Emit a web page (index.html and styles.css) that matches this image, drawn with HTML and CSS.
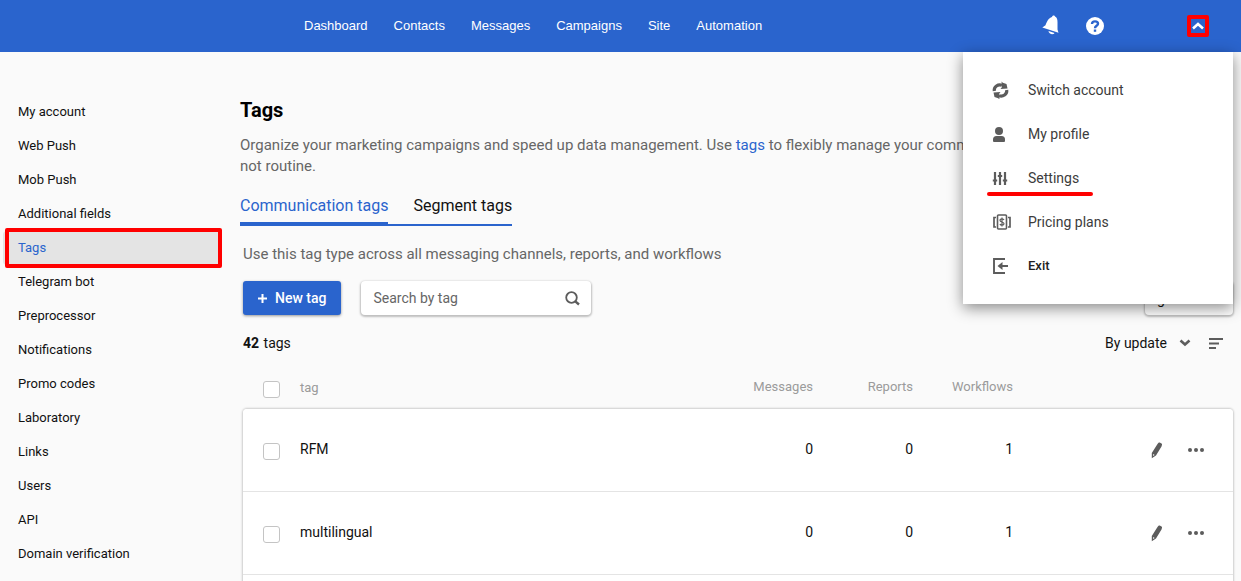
FILE: index.html
```html
<!DOCTYPE html>
<html lang="en">
<head>
<meta charset="utf-8">
<title>Tags</title>
<link rel="stylesheet" href="styles.css">
</head>
<body>
<header class="topbar">
  <nav class="topnav" aria-label="Main">
    <a href="#">Dashboard</a>
    <a href="#">Contacts</a>
    <a href="#">Messages</a>
    <a href="#">Campaigns</a>
    <a href="#">Site</a>
    <a href="#">Automation</a>
  </nav>
  <div class="tools">
    <button class="icon-btn bell" aria-label="Notifications">
      <svg width="18" height="20" viewBox="0 0 18 20"><path fill="#fff" d="M10 2C10 .3 12.600-.2 13 1.500C14.800 2.300 15.500 4 15.500 7V14.500L16.500 17.800L.3 12.400L3.500 10.200C5 6.500 6.500 3 10 2ZM6.500 16L12.500 18C11.500 20.300 6.500 19 6.500 16Z"/></svg>
    </button>
    <button class="icon-btn help" aria-label="Help">
      <svg width="18" height="18" viewBox="0 0 18 18"><circle cx="9" cy="9" r="9" fill="#fff"/><path d="M6 7C6 3.400 12 3.600 12 6.800C12 8.800 9 8.900 9 11.200" fill="none" stroke="#2a64cd" stroke-width="2.400"/><path fill="#2a64cd" d="M7.800 12.500h2.400v2.300H7.800z"/></svg>
    </button>
    <div class="account">
      <button class="account-toggle" aria-label="Account menu" aria-expanded="true">
        <svg width="12" height="8" viewBox="0 0 12 8"><path d="M1 6.500L6 2L11 6.500" fill="none" stroke="#fff" stroke-width="2.600"/></svg>
      </button>
      <div class="menu">
        <a href="#"><svg width="18" height="18" viewBox="0 0 18 18"><path d="M2.300 10C1.700 5.500 6 3 10 4.300M14.700 9C15.300 13.500 11 16 7 14.700" fill="none" stroke="#5c5c5c" stroke-width="3.200"/><path fill="#5c5c5c" d="M9.500.5L10.800 1.800L14.500 3L15.500 7.500L8.500 8L10 6ZM7.500 18.500L6.200 17.200L2.500 16L1.500 11.500L8.500 11L7 13Z"/></svg>Switch account</a>
        <a href="#"><svg width="18" height="18" viewBox="0 0 18 18"><circle cx="7" cy="6" r="4" fill="#5c5c5c"/><path fill="#5c5c5c" d="M1 16V14.500Q1 11 4.500 11H9.500Q13 11 13 14.500V16Q13 17 12 17H2Q1 17 1 16Z"/></svg>My profile</a>
        <a href="#" class="marked"><svg width="18" height="18" viewBox="0 0 18 18"><path d="M3 3V16M8 3V16M13 3V16" stroke="#5c5c5c" stroke-width="2.200"/><path d="M.8 11.500H5.200M5.800 7H10.200M10.800 11.500H15.200" stroke="#5c5c5c" stroke-width="2.200"/></svg>Settings</a>
        <a href="#"><svg width="20" height="18" viewBox="0 0 20 18"><path d="M4 4.500H2V14H4M16 4.500H18V14H16" fill="none" stroke="#5c5c5c" stroke-width="1.700"/><rect x="5.500" y="2" width="9" height="14" rx="1" fill="none" stroke="#5c5c5c" stroke-width="1.600"/><path d="M12 7Q11.500 5.800 10 5.800Q8 5.800 8 7.300Q8 8.500 10 9Q12 9.500 12 10.800Q12 12.200 10 12.200Q8.300 12.200 8 11M10 4.500V13.500" fill="none" stroke="#5c5c5c" stroke-width="1.200"/></svg>Pricing plans</a>
        <a href="#" class="exit"><svg width="18" height="18" viewBox="0 0 18 18"><path d="M13 2H2V16H13" fill="none" stroke="#5c5c5c" stroke-width="1.900"/><path d="M16 9H9" stroke="#5c5c5c" stroke-width="2"/><path fill="#5c5c5c" d="M5.500 9L10.500 5V13Z"/></svg>Exit</a>
      </div>
    </div>
  </div>
</header>
<div class="layout">
  <nav class="sidebar" aria-label="Settings">
    <a href="#">My account</a>
    <a href="#">Web Push</a>
    <a href="#">Mob Push</a>
    <a href="#">Additional fields</a>
    <a href="#" class="current">Tags</a>
    <a href="#">Telegram bot</a>
    <a href="#">Preprocessor</a>
    <a href="#">Notifications</a>
    <a href="#">Promo codes</a>
    <a href="#">Laboratory</a>
    <a href="#">Links</a>
    <a href="#">Users</a>
    <a href="#">API</a>
    <a href="#">Domain verification</a>
  </nav>
  <main class="main">
    <h1>Tags</h1>
    <p class="lead">Organize your marketing campaigns and speed up data management. Use <a href="#">tags</a> to flexibly manage your communications,<br>not routine.</p>
    <div class="tabs">
      <button class="tab active">Communication tags</button>
      <button class="tab">Segment tags</button>
    </div>
    <section class="panel">
      <p class="hint">Use this tag type across all messaging channels, reports, and workflows</p>
      <div class="actions">
        <button class="new-tag"><svg width="9" height="9" viewBox="0 0 9 9"><path d="M4.500 0V9M0 4.500H9" stroke="#fff" stroke-width="2"/></svg>New tag</button>
        <div class="search">
          <input type="text" placeholder="Search by tag" aria-label="Search by tag">
          <svg width="15" height="15" viewBox="0 0 15 15"><circle cx="6.500" cy="6.500" r="5.300" fill="none" stroke="#5c5c5c" stroke-width="1.800"/><path d="M10.300 10.300L14 13.500" stroke="#5c5c5c" stroke-width="2.400"/></svg>
        </div>
        <button class="extra">g</button>
      </div>
      <div class="summary">
        <p><b>42</b> tags</p>
        <button class="sort">By update<svg width="12" height="8" viewBox="0 0 12 8"><path d="M1.500 1.500L6 5.500L10.500 1.500" fill="none" stroke="#5c5c5c" stroke-width="2.600"/></svg></button>
        <button class="order" aria-label="Sort order"><svg width="14" height="11" viewBox="0 0 14 11"><path d="M0 1H14M0 5.500H10M0 10H7" stroke="#5c5c5c" stroke-width="1.800"/></svg></button>
      </div>
      <table class="tags">
        <thead>
          <tr><th class="check"><input type="checkbox" aria-label="Select all"></th><th class="name">tag</th><th class="num">Messages</th><th class="num">Reports</th><th class="num">Workflows</th><th class="ops" aria-label="Actions"></th></tr>
        </thead>
        <tbody>
          <tr>
            <td class="check"><input type="checkbox" aria-label="RFM"></td><td>RFM</td><td class="num">0</td><td class="num">0</td><td class="num">1</td>
            <td><div class="row-tools">
              <button class="icon-btn" aria-label="Edit"><svg width="12" height="17" viewBox="0 0 12 17"><path fill="#5c5c5c" d="M6.500 2L7.500.8Q8 .3 8.700.6L10.500 1.500Q11.300 2 11 2.800L10.500 4.500L5 13.500L.8 16.200V11ZM2.200 12L2 14L3.700 12.900Z" fill-rule="evenodd"/></svg></button>
              <button class="icon-btn" aria-label="More"><svg width="16" height="4" viewBox="0 0 16 4"><g fill="#5c5c5c"><circle cx="2" cy="2" r="2"/><circle cx="8" cy="2" r="2"/><circle cx="14" cy="2" r="2"/></g></svg></button>
            </div></td>
          </tr>
          <tr>
            <td class="check"><input type="checkbox" aria-label="multilingual"></td><td>multilingual</td><td class="num">0</td><td class="num">0</td><td class="num">1</td>
            <td><div class="row-tools">
              <button class="icon-btn" aria-label="Edit"><svg width="12" height="17" viewBox="0 0 12 17"><path fill="#5c5c5c" d="M6.500 2L7.500.8Q8 .3 8.700.6L10.500 1.500Q11.300 2 11 2.800L10.500 4.500L5 13.500L.8 16.200V11ZM2.200 12L2 14L3.700 12.900Z" fill-rule="evenodd"/></svg></button>
              <button class="icon-btn" aria-label="More"><svg width="16" height="4" viewBox="0 0 16 4"><g fill="#5c5c5c"><circle cx="2" cy="2" r="2"/><circle cx="8" cy="2" r="2"/><circle cx="14" cy="2" r="2"/></g></svg></button>
            </div></td>
          </tr>
          <tr class="next"><td colspan="6"></td></tr>
        </tbody>
      </table>
    </section>
  </main>
</div>
</body>
</html>
```
FILE: styles.css
```css
* { box-sizing: border-box; }

body {
  margin: 0;
  height: 100vh;
  overflow: hidden;
  background: #fafafa;
  color: #111;
  font: 14px/20px Roboto, sans-serif;
}

h1, p { margin: 0; }
a { color: inherit; text-decoration: none; }
svg { display: block; flex: none; }

button {
  padding: 0;
  border: 0;
  background: none;
  color: inherit;
  font: inherit;
}

.topbar {
  display: flex;
  justify-content: space-between;
  align-items: center;
  height: 52px;
  padding: 0 32px 0 304px;
  background: #2a64cd;
  color: #fff;
}

.topnav {
  display: flex;
  gap: 26px;
  font-family: "Liberation Sans", Arial, sans-serif;
  font-size: 13px;
}
.tools { display: flex; align-items: center; }
.bell { padding-bottom: 3px; }
.help { margin: 0 83px 0 26px; }
.account { position: relative; }

.account-toggle {
  display: flex;
  justify-content: center;
  align-items: center;
  width: 22px;
  height: 22px;
  border: 4px solid #f00;
  border-radius: 2px;
}

.menu {
  position: absolute;
  top: 37px;
  right: -24px;
  z-index: 2;
  width: 270px;
  padding: 16px 0;
  background: #fff;
  box-shadow: 0 4px 14px rgba(0, 0, 0, .45);
  color: #3c3c3c;
}

.menu a {
  position: relative;
  display: grid;
  grid-template-columns: 36px 1fr;
  align-items: center;
  height: 44px;
  padding: 0 29px;
}

.menu .exit { color: #222; font-size: 13px; font-weight: 500; }

.marked::after {
  content: "";
  position: absolute;
  left: 24px;
  bottom: 4px;
  width: 106px;
  height: 4px;
  border-radius: 2px;
  background: #f00;
}

.layout { display: flex; }

.sidebar {
  flex: none;
  width: 240px;
  padding: 43px 18px 0 3px;
  font-size: 13px;
}

.sidebar a {
  position: relative;
  display: flex;
  align-items: center;
  height: 34px;
  padding-left: 15px;
  border-radius: 4px;
}

.sidebar .current { background: #e4e4e4; color: #2a64cd; }

.sidebar .current::after {
  content: "";
  position: absolute;
  inset: -3px 0 -3px 2px;
  border: 4px solid #f00;
  border-radius: 2px;
}

.main { flex: 1; min-width: 0; padding: 44px 8px 0 0; }
h1 { color: #000; font-size: 20px; line-height: 28px; font-weight: 700; }

.lead {
  margin-top: 11px;
  color: #666;
  font-size: 15px;
  line-height: 21px;
  white-space: nowrap;
}
.lead a { color: #2a64cd; }

.tabs {
  display: flex;
  gap: 25px;
  width: max-content;
  margin-top: 17px;
  border-bottom: 2px solid #2a64cd;
  font-size: 16px;
  line-height: 24px;
}
.tab { margin-bottom: -2px; padding-bottom: 4px; border-bottom: 4px solid transparent; }
.tab.active { border-color: #2a64cd; color: #2a64cd; }

.panel { padding-left: 3px; }
.hint { margin-top: 18px; color: #666; font-size: 15px; }

.actions { display: flex; margin-top: 17px; }

.new-tag {
  display: flex;
  align-items: center;
  gap: 8px;
  height: 34px;
  padding: 0 15px;
  border-radius: 3px;
  background: #2a64cd;
  box-shadow: 0 1px 3px rgba(0, 0, 0, .4);
  color: #fff;
  font-weight: 500;
}

.search, .extra {
  height: 34px;
  border-radius: 4px;
  background: #fff;
  box-shadow: 0 1px 2px 1px rgba(0, 0, 0, .24);
}

.search {
  display: flex;
  align-items: center;
  width: 230px;
  margin-left: 20px;
  padding: 0 11px 0 12px;
}

.search input {
  flex: 1;
  min-width: 0;
  padding: 0;
  border: 0;
  outline: 0;
  background: none;
  font: inherit;
}
.search input::placeholder { color: #666; opacity: 1; }

.extra { width: 88px; margin-left: auto; padding: 2px 0 0 12px; text-align: left; }

.summary { display: flex; align-items: center; margin-top: 18px; }
.summary b { margin-right: 1px; font-weight: 700; }
.sort { display: flex; align-items: center; gap: 12px; margin-left: auto; }
.order { margin: 0 10px 0 18px; }

.tags {
  width: 100%;
  margin-top: 14px;
  border-spacing: 0;
  table-layout: fixed;
}

th {
  height: 42px;
  padding: 0;
  color: #9b9b9b;
  font-size: 13px;
  font-weight: 400;
  text-align: left;
}
td { height: 83px; padding: 0 0 3px; border-bottom: 1px solid #e4e4e4; background: #fff; }
.tags .check { width: 57px; padding: 2px 0 0 20px; }
.tags .num { width: 100px; text-align: right; }
.tags th.num { padding-bottom: 3px; }
.tags .ops { width: 220px; }

tbody { border-radius: 4px; box-shadow: 0 0 2px 1px rgba(0, 0, 0, .18); }
tbody tr:first-child td:first-child { border-top-left-radius: 4px; }
tbody tr:first-child td:last-child { border-top-right-radius: 4px; }

input[type="checkbox"] {
  display: block;
  width: 17px;
  height: 17px;
  margin: 0;
  appearance: none;
  border: 1px solid #c4c4c4;
  border-radius: 3px;
  background: #fff;
}

.row-tools {
  display: flex;
  justify-content: flex-end;
  align-items: center;
  gap: 25px;
  padding: 3px 29px 0 0;
}
```
